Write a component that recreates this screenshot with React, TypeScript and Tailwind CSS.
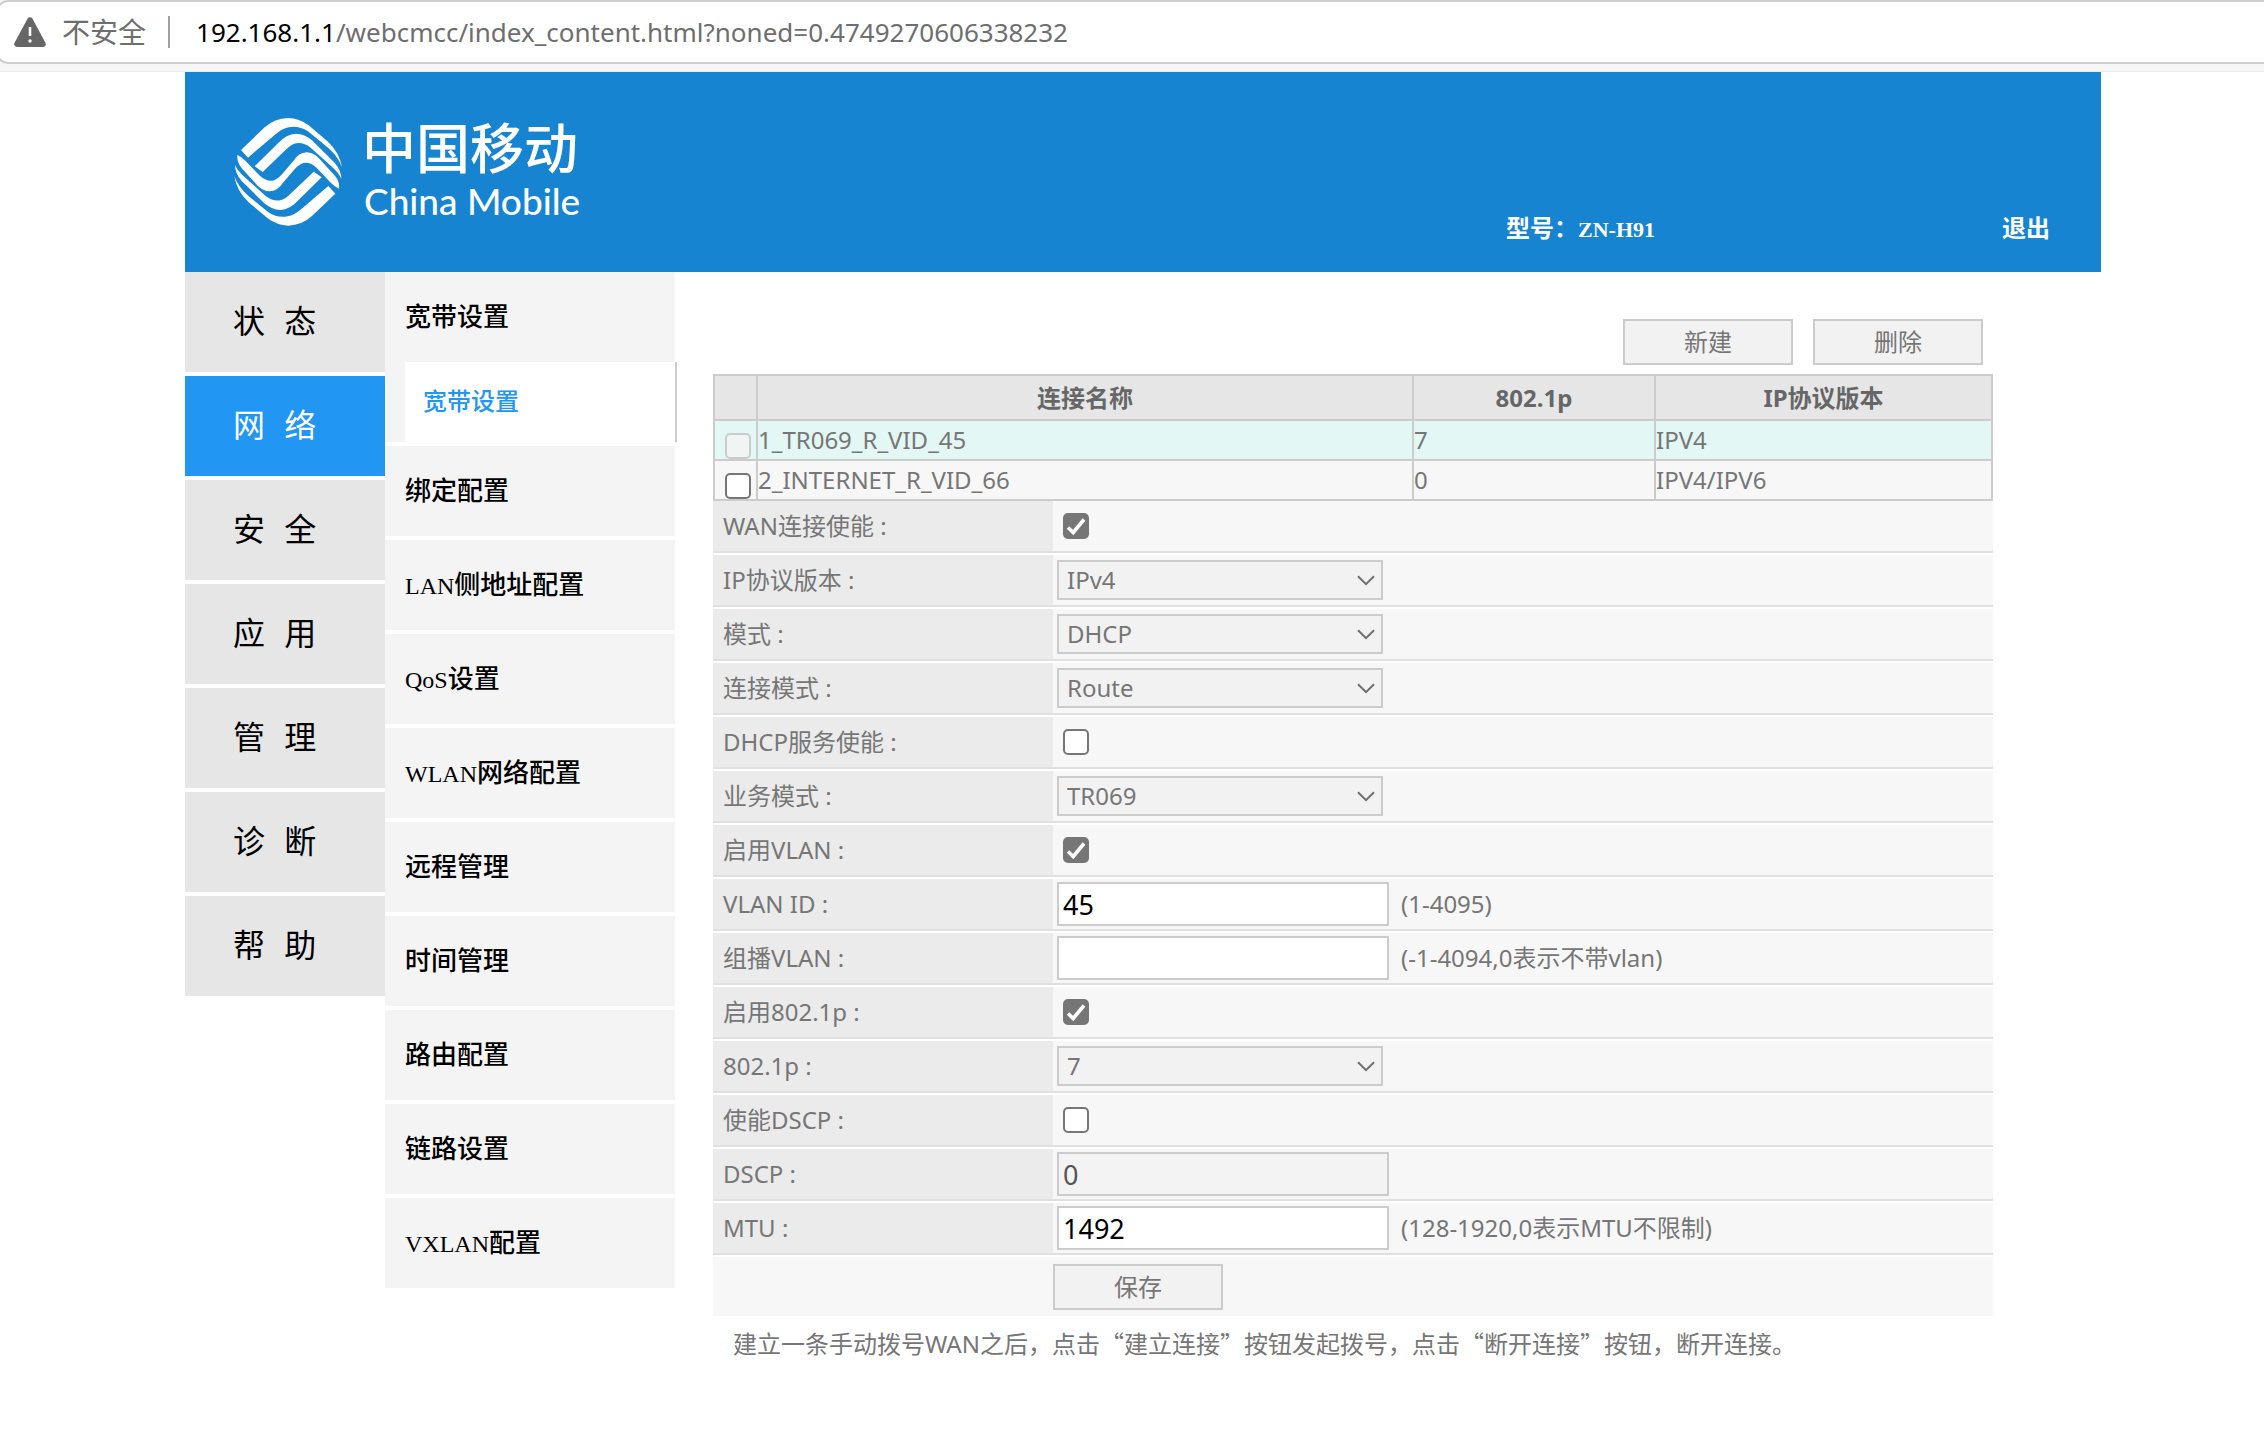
import React, { useState } from 'react';

interface Connection {
  id: string;
  name: string;
  priority: string;
  ipVersion: string;
  locked?: boolean;
}

interface FieldConfig {
  id: string;
  label: string;
  type: 'check' | 'select' | 'text';
  value?: string;
  checked?: boolean;
  disabled?: boolean;
  hint?: string;
}

const MAIN_MENU = ['状 态', '网 络', '安 全', '应 用', '管 理', '诊 断', '帮 助'];

// Latin prefixes are kept apart, they are set smaller than the Chinese
const SUB_MENU = [
  { prefix: '', name: '绑定配置' },
  { prefix: 'LAN', name: '侧地址配置' },
  { prefix: 'QoS', name: '设置' },
  { prefix: 'WLAN', name: '网络配置' },
  { prefix: '', name: '远程管理' },
  { prefix: '', name: '时间管理' },
  { prefix: '', name: '路由配置' },
  { prefix: '', name: '链路设置' },
  { prefix: 'VXLAN', name: '配置' },
];

const CONNECTIONS: Connection[] = [
  { id: 'wan1', name: '1_TR069_R_VID_45', priority: '7', ipVersion: 'IPV4', locked: true },
  { id: 'wan2', name: '2_INTERNET_R_VID_66', priority: '0', ipVersion: 'IPV4/IPV6' },
];

const FIELDS: FieldConfig[] = [
  { id: 'wanEnable', label: 'WAN连接使能 :', type: 'check', checked: true },
  { id: 'ipVersion', label: 'IP协议版本 :', type: 'select', value: 'IPv4' },
  { id: 'mode', label: '模式 :', type: 'select', value: 'DHCP' },
  { id: 'connMode', label: '连接模式 :', type: 'select', value: 'Route' },
  { id: 'dhcpEnable', label: 'DHCP服务使能 :', type: 'check' },
  { id: 'service', label: '业务模式 :', type: 'select', value: 'TR069' },
  { id: 'vlanEnable', label: '启用VLAN :', type: 'check', checked: true },
  { id: 'vlanId', label: 'VLAN ID :', type: 'text', value: '45', hint: '(1-4095)' },
  { id: 'mvlan', label: '组播VLAN :', type: 'text', value: '', hint: '(-1-4094,0表示不带vlan)' },
  { id: 'dot1pEnable', label: '启用802.1p :', type: 'check', checked: true },
  { id: 'dot1p', label: '802.1p :', type: 'select', value: '7' },
  { id: 'dscpEnable', label: '使能DSCP :', type: 'check' },
  { id: 'dscp', label: 'DSCP :', type: 'text', value: '0', disabled: true },
  { id: 'mtu', label: 'MTU :', type: 'text', value: '1492', hint: '(128-1920,0表示MTU不限制)' },
];

const AddressBar: React.FC = () => (
  <div className="h-[72px] overflow-hidden border-b border-[#ebebeb] bg-[#f7f7f7]">
    <div className="-ml-1 flex h-16 items-center rounded-l-xl border-2 border-r-0 border-[#cdcdcd] bg-white pl-4 text-[26px] text-[#6e6e6e]">
      <svg viewBox="0 0 32 30" className="h-[30px] w-8 shrink-0" aria-hidden="true">
        <path d="M13.6 1.6a2.7 2.7 0 0 1 4.8 0l13 24.2A2.8 2.8 0 0 1 29 30H3a2.8 2.8 0 0 1-2.4-4.2z" fill="#666" />
        <path d="M16 10v9" stroke="#fff" strokeWidth="2.6" />
        <circle cx="16" cy="24" r="1.7" fill="#fff" />
      </svg>
      <span className="ml-4 text-[28px]">不安全</span>
      <span className="ml-[22px] h-8 w-[2px] bg-[#a0a0a0]" />
      <span className="ml-[26px]">
        <span className="text-black">192.168.1.1</span>
        /webcmcc/index_content.html?noned=0.4749270606338232
      </span>
    </div>
  </div>
);

// The lower half of the emblem is the upper half turned by 180 degrees
const Emblem: React.FC = () => (
  <svg viewBox="28 26 324 324" className="size-[108px] shrink-0" fill="#fff" aria-hidden="true">
    <g id="bands">
      <path d="M49 122 L120 54 Q150 27 190 26 Q224 27 252 48 L310 97 Q345 130 352 174 Q340 142 312 117 L250 66 Q222 48 192 54 Q172 58 150 77 L70 145 Z" />
      <path d="M90 171 L160 102 Q185 74 214 73 Q240 74 262 93 L330 160 Q350 184 350 208 Q343 192 325 175 L258 115 Q236 98 214 102 Q200 105 185 120 L114 188 Z" />
    </g>
    <use href="#bands" transform="rotate(180 190.5 187.5)" />
    <path d="M38 137 Q50 142 62 154 L104 198 Q124 217 144 214 Q156 211 170 197 L206 155 Q222 130 246 129 Q266 130 282 146 L328 196 Q346 214 343 238 Q331 233 319 221 L277 177 Q257 158 237 161 Q225 164 211 178 L175 220 Q159 245 135 246 Q115 245 99 229 L53 179 Q36 160 38 137 Z" />
  </svg>
);

const Header: React.FC = () => (
  <header className="flex h-[200px] items-start bg-[#1784d2] pl-[49px] text-white">
    <div className="flex items-start gap-5 pt-[46px]">
      <Emblem />
      <div className="flex flex-col pt-1 whitespace-nowrap">
        <span className="font-['Liberation_Sans','Noto_Sans_CJK_SC',sans-serif] text-[54px] leading-[57px] font-medium">中国移动</span>
        <span className="pl-[2px] font-['Lato',sans-serif] text-[37px] leading-[44px] font-medium">China Mobile</span>
      </div>
    </div>
    <div className="ml-auto flex pt-[141px] font-['Liberation_Serif','Noto_Sans_CJK_SC',serif] text-2xl leading-[32px] font-bold whitespace-nowrap">
      <span className="w-[496px]">
        型号：<span className="text-[22px]">ZN-H91</span>
      </span>
      <a href="#logout" className="w-[99px]">退出</a>
    </div>
  </header>
);

const Checkbox: React.FC<{ id?: string; label?: string; defaultChecked?: boolean; disabled?: boolean }> = ({ id, label, defaultChecked, disabled }) => (
  <span className="relative block size-[26px]">
    <input
      type="checkbox"
      id={id}
      aria-label={label}
      defaultChecked={defaultChecked}
      disabled={disabled}
      className="peer block size-[26px] appearance-none rounded-[5px] border-2 border-[#767676] bg-white checked:bg-[#767676] disabled:border-[#c8cdcc] disabled:bg-[#f0f5f4]"
    />
    <svg viewBox="0 0 26 26" className="pointer-events-none absolute inset-0 hidden size-[26px] peer-checked:block" aria-hidden="true">
      <path d="M5 14.5 10.2 19.5 21 6.5" fill="none" stroke="#fff" strokeWidth="3.6" />
    </svg>
  </span>
);

const Button: React.FC<{ children: React.ReactNode }> = ({ children }) => (
  <button type="button" className="h-[46px] w-[170px] border-2 border-[#ccc] bg-[#f2f2f2] text-2xl leading-none text-[#767676]">
    {children}
  </button>
);

const Field: React.FC<{ field: FieldConfig }> = ({ field }) => (
  <div className="mb-[2px] flex h-[52px] border-b-2 border-[#e0e0e0] bg-[#f7f7f7]">
    <label htmlFor={field.id} className="flex w-[340px] shrink-0 items-center bg-[#ebebeb] pl-[10px]">
      {field.label}
    </label>
    <div className="flex items-center pl-1">
      {field.type === 'check' && (
        <div className="pl-[6px]">
          <Checkbox id={field.id} defaultChecked={field.checked} />
        </div>
      )}
      {field.type === 'select' && (
        <div className="relative">
          <select
            id={field.id}
            disabled
            className="block h-10 w-[326px] appearance-none border-2 border-[#ccc] bg-[#f2f2f2] pl-2 text-2xl leading-[32px] text-[#767676] opacity-100"
          >
            <option>{field.value}</option>
          </select>
          <svg viewBox="0 0 18 11" className="pointer-events-none absolute top-[15px] right-2 h-[11px] w-[18px]" aria-hidden="true">
            <path d="M1 1.2 9 9.2 17 1.2" fill="none" stroke="#6e6e6e" strokeWidth="2" />
          </svg>
        </div>
      )}
      {field.type === 'text' && (
        <input
          type="text"
          id={field.id}
          defaultValue={field.value}
          disabled={field.disabled}
          className="h-11 w-[332px] border-2 border-[#ccc] bg-white pl-1 text-[27px] text-black disabled:bg-[#f3f3f3] disabled:text-[#545454]"
        />
      )}
      {field.hint && <span className="ml-3">{field.hint}</span>}
    </div>
  </div>
);

const ConnectionTable: React.FC = () => (
  <table className="w-full table-fixed border-collapse text-left">
    <colgroup>
      <col className="w-[43px]" />
      <col />
      <col className="w-[242px]" />
      <col className="w-[337px]" />
    </colgroup>
    <thead>
      <tr className="h-[45px] bg-[#e6e6e6] text-center text-[#666]">
        <th className="border-2 border-[#ccc] p-0" aria-label="选择" />
        <th className="border-2 border-[#ccc] p-0 leading-[32px]">连接名称</th>
        <th className="border-2 border-[#ccc] p-0 leading-[32px]">802.1p</th>
        <th className="border-2 border-[#ccc] p-0 leading-[32px]">IP协议版本</th>
      </tr>
    </thead>
    <tbody className="leading-[32px]">
      {CONNECTIONS.map((c) => (
        <tr key={c.id} className={c.locked ? 'h-10 bg-[#e3f7f4]' : 'h-10 bg-[#f7f7f7]'}>
          <td className="border-2 border-[#ccc] p-0 pl-[10px] align-bottom">
            <Checkbox label={c.name} disabled={c.locked} />
          </td>
          <td className="border-2 border-[#ccc] p-0">{c.name}</td>
          <td className="border-2 border-[#ccc] p-0">{c.priority}</td>
          <td className="border-2 border-[#ccc] p-0">{c.ipVersion}</td>
        </tr>
      ))}
    </tbody>
  </table>
);

const App: React.FC = () => {
  const [active, setActive] = useState(1);

  return (
    <div className="min-h-screen bg-white font-['Noto_Sans','Noto_Sans_CJK_SC',sans-serif]">
      <AddressBar />

      <div className="pr-[163px] pl-[185px]">
        <Header />

        <div className="flex items-start">
          {/* Main menu */}
          <nav className="flex w-[200px] shrink-0 flex-col gap-1 font-['Liberation_Mono','Noto_Sans_CJK_SC',monospace] text-[32px]">
            {MAIN_MENU.map((item, i) => (
              <button
                key={item}
                type="button"
                onClick={() => setActive(i)}
                className={`h-[100px] pt-[6px] pl-12 text-left ${i === active ? 'bg-[#2196f3] text-white' : 'bg-[#e6e6e6] text-black'}`}
              >
                {item}
              </button>
            ))}
          </nav>

          {/* Sub menu */}
          <nav className="flex w-[292px] shrink-0 flex-col gap-1 font-['Liberation_Serif','Noto_Sans_CJK_SC',serif] text-[26px] font-medium text-black">
            <div>
              <a href="#broadband" className="mr-[2px] flex h-[90px] items-center bg-[#f4f4f4] pl-5">宽带设置</a>
              <div className="mr-[2px] flex h-20 bg-[#f4f4f4] pl-5">
                <a href="#broadband-settings" className="-mr-[2px] flex flex-1 items-center border-r-2 border-[#ccc] bg-white pl-[18px] text-2xl text-[#2196f3]">
                  宽带设置
                </a>
              </div>
            </div>
            {SUB_MENU.map((item) => (
              <a key={item.name} href="#menu" className="mr-[2px] flex h-[90px] items-center bg-[#f4f4f4] pl-5">
                <span>
                  {item.prefix && <span className="text-2xl">{item.prefix}</span>}
                  {item.name}
                </span>
              </a>
            ))}
          </nav>

          {/* Content */}
          <main className="min-w-0 flex-1 pr-[108px] pl-9 text-2xl text-[#767676]">
            <div className="flex justify-end gap-5 pt-[47px] pr-[10px] pb-[9px]">
              <Button>新建</Button>
              <Button>删除</Button>
            </div>
            <ConnectionTable />
            <form>
              {FIELDS.map((f) => (
                <Field key={f.id} field={f} />
              ))}
              <div className="flex h-[59px] items-center bg-[#f7f7f7] pl-[340px]">
                <Button>保存</Button>
              </div>
            </form>
            <p lang="zh-CN" className="pt-[10px] pl-5 font-['Noto_Sans_CJK_SC',sans-serif] leading-[34px]">
              建立一条手动拨号<span className="font-['Noto_Sans',sans-serif]">WAN</span>之后，点击“建立连接”按钮发起拨号，点击“断开连接”按钮，断开连接。
            </p>
          </main>
        </div>
      </div>
    </div>
  );
};

export default App;
